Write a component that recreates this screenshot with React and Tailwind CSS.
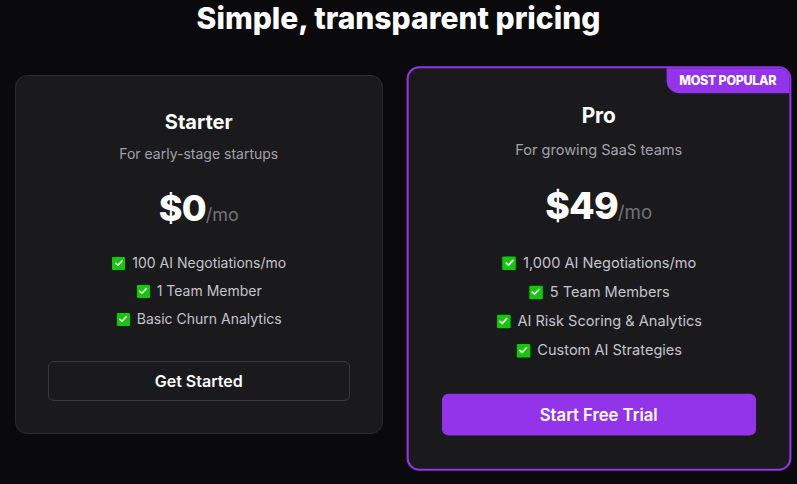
import React from "react";

const plans = [
  {
    name: "Starter",
    blurb: "For early-stage startups",
    price: "$0",
    features: ["100 AI Negotiations/mo", "1 Team Member", "Basic Churn Analytics"],
    cta: "Get Started",
    popular: false,
  },
  {
    name: "Pro",
    blurb: "For growing SaaS teams",
    price: "$49",
    features: [
      "1,000 AI Negotiations/mo",
      "5 Team Members",
      "AI Risk Scoring & Analytics",
      "Custom AI Strategies",
    ],
    cta: "Start Free Trial",
    popular: true,
  },
];

//---------------green tick box used in the feature lists----------
function Tick() {
  return (
    <span className="inline-flex items-center justify-center w-[15px] h-[15px] bg-[#16c60c] border border-[#0b2a08] rounded-[2px] shrink-0">
      <svg viewBox="0 0 12 12" className="w-[10px] h-[10px]" fill="none">
        <path
          d="M2.2 6.3 L4.8 8.7 L9.8 3.2"
          stroke="white"
          strokeWidth="1.9"
          strokeLinecap="round"
          strokeLinejoin="round"
        />
      </svg>
    </span>
  );
}

function PlanCard({ plan }) {
  return (
    <div
      className={`relative rounded-xl bg-[#1a1a1c] p-8 text-center ${
        plan.popular
          ? "border-2 border-[#9333ea] scale-[1.04] -m-px"
          : "border border-[#2b2b2e]"
      }`}
    >
      {plan.popular && (
        <div className="absolute top-0 right-0 bg-[#9333ea] text-white text-xs font-extrabold px-3 py-1 rounded-bl-xl rounded-tr-[10px] tracking-tight">
          MOST POPULAR
        </div>
      )}
      <h3 className="text-xl font-bold text-white">{plan.name}</h3>
      <p className="mt-2 text-sm text-[#a1a1aa]">{plan.blurb}</p>
      <div className="mt-6 flex items-baseline justify-center">
        <span className="text-4xl font-extrabold text-white tracking-tight">
          {plan.price}
        </span>
        <span className="text-lg text-[#71717a]">/mo</span>
      </div>
      <ul className="mt-6 space-y-2 text-sm text-[#c4c4cc]">
        {plan.features.map((f) => (
          <li key={f} className="flex items-center justify-center gap-[6px] leading-5">
            <Tick />
            <span>{f}</span>
          </li>
        ))}
      </ul>
      <button
        className={`mt-8 w-full rounded-md py-[7px] text-base font-semibold text-white ${
          plan.popular
            ? "bg-[#9333ea] border border-[#9333ea]"
            : "bg-transparent border border-[#3a3a3e]"
        }`}
      >
        {plan.cta}
      </button>
    </div>
  );
}

export default function App() {
  return (
    <main
      className="min-h-screen bg-[#0a0a0c] px-[15px] overflow-hidden"
      style={{ fontFamily: "Inter, 'Liberation Sans', sans-serif" }}
    >
      <h2 className="text-3xl font-extrabold text-white text-center leading-9">
        Simple, transparent pricing
      </h2>
      <section className="mt-[39px] grid grid-cols-2 gap-8 items-start w-[767px]">
        {plans.map((p) => (
          <PlanCard key={p.name} plan={p} />
        ))}
      </section>
    </main>
  );
}
